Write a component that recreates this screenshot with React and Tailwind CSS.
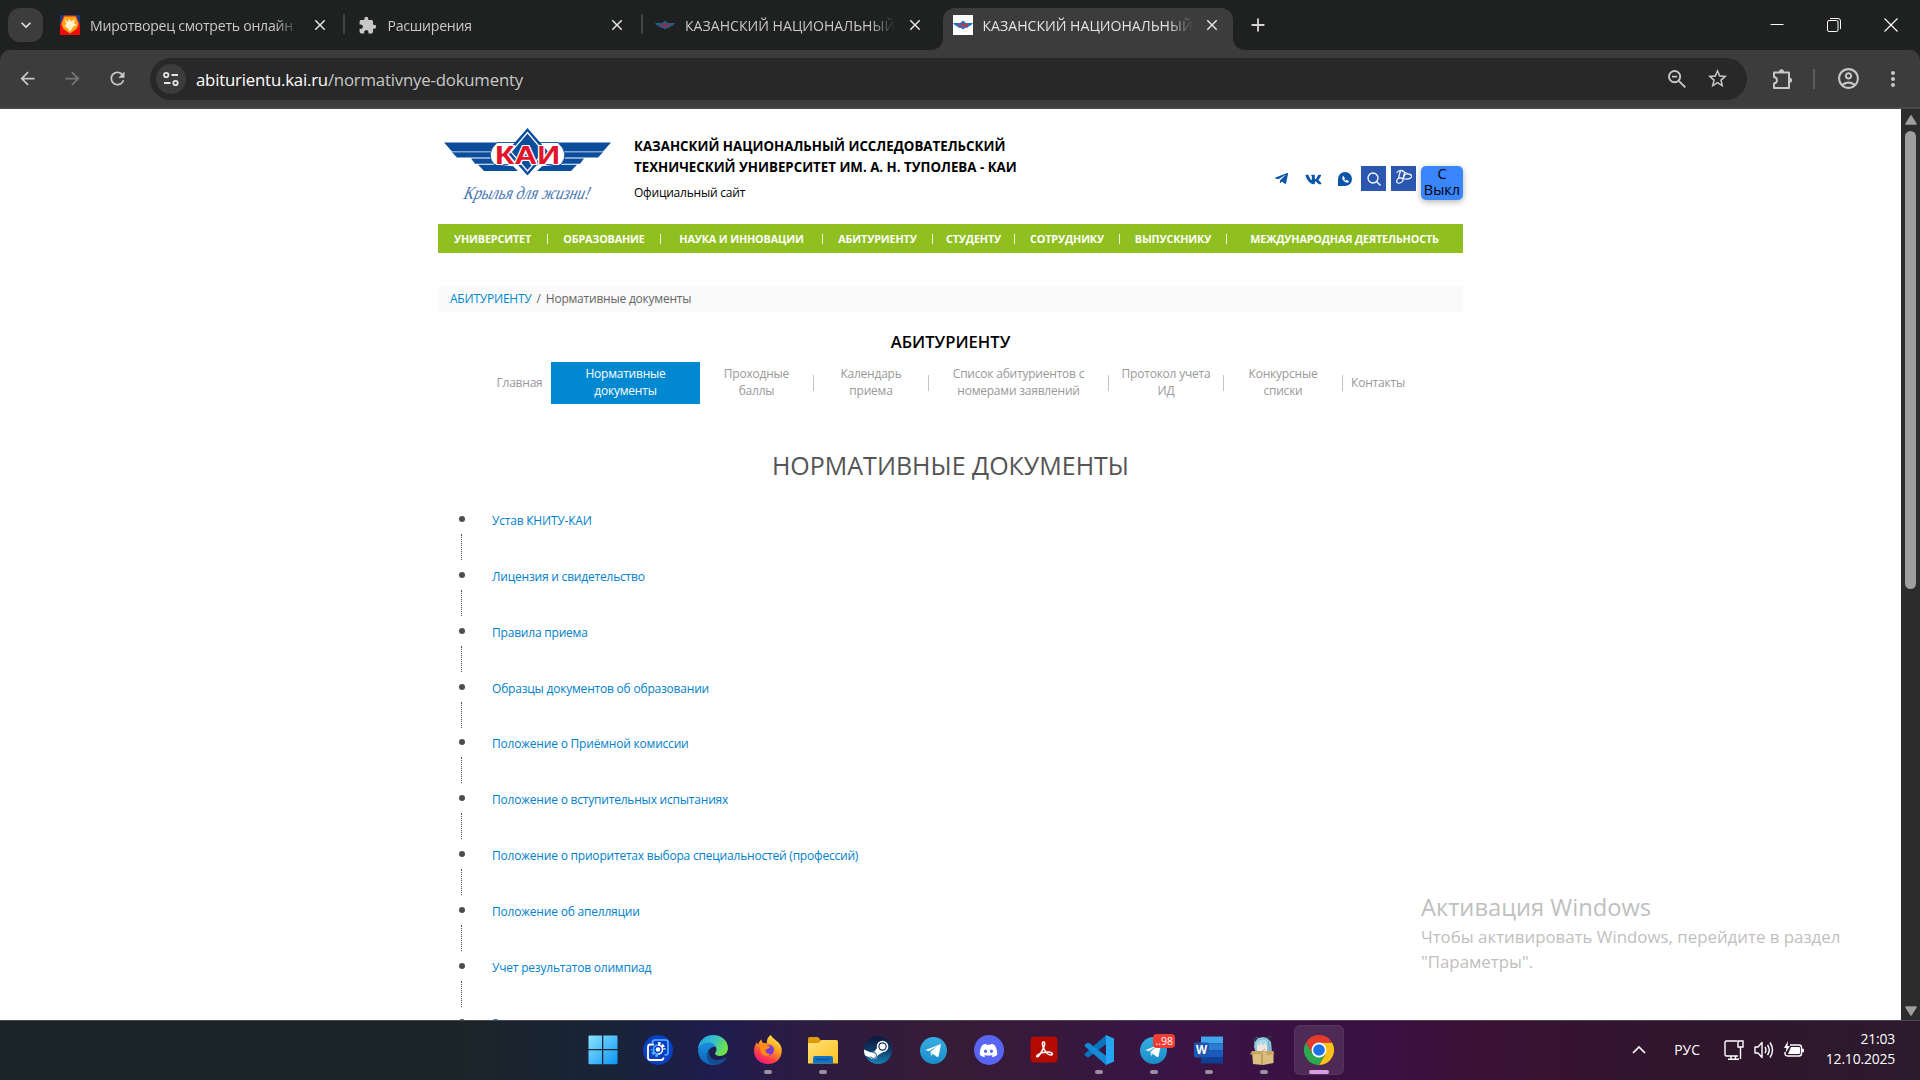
import React from "react";
import {
  MdArrowBack, MdArrowForward, MdRefresh, MdClose, MdAdd, MdExtension,
  MdStarOutline, MdMoreVert, MdKeyboardArrowDown, MdOutlineAccountCircle,
} from "react-icons/md";
import { FaTelegramPlane, FaVk, FaDiscord } from "react-icons/fa";

const tabs = [
  { title: "Миротворец смотреть онлайн", icon: "shield", sep: true, text: "tracking-[-0.018em]" },
  { title: "Расширения", icon: "puzzle", sep: true, text: "tracking-[-0.018em]" },
  { title: "КАЗАНСКИЙ НАЦИОНАЛЬНЫЙ", icon: "kai", text: "" },
  { title: "КАЗАНСКИЙ НАЦИОНАЛЬНЫЙ", icon: "kaiWhite", active: true, text: "" },
];

const nav = [
  ["УНИВЕРСИТЕТ", "w-[110px]"],
  ["ОБРАЗОВАНИЕ", "w-[113px]"],
  ["НАУКА И ИННОВАЦИИ", "w-[162px]"],
  ["АБИТУРИЕНТУ", "w-[110px]"],
  ["СТУДЕНТУ", "w-[82px]"],
  ["СОТРУДНИКУ", "w-[105px]"],
  ["ВЫПУСКНИКУ", "w-[107px]"],
  ["МЕЖДУНАРОДНАЯ ДЕЯТЕЛЬНОСТЬ", "w-[235px]"],
];

const subnav = [
  [["Главная"], "w-[63px]", "none"],
  [["Нормативные", "документы"], "w-[149px]", "active"],
  [["Проходные", "баллы"], "w-[114px]", "sep"],
  [["Календарь", "приема"], "w-[115px]", "sep"],
  [["Список абитуриентов с", "номерами заявлений"], "w-[180px]", "sep"],
  [["Протокол учета", "ИД"], "w-[115px]", "sep"],
  [["Конкурсные", "списки"], "w-[119px]", "sep"],
  [["Контакты"], "w-[70px]", "none"],
];

const docs = [
  "Устав КНИТУ-КАИ",
  "Лицензия и свидетельство",
  "Правила приема",
  "Образцы документов об образовании",
  "Положение о Приёмной комиссии",
  "Положение о вступительных испытаниях",
  "Положение о приоритетах выбора специальностей (профессий)",
  "Положение об апелляции",
  "Учет результатов олимпиад",
  "Заявления",
];

function MiniWings() {
  return (
    <svg viewBox="0 0 20 20" className="h-5 w-5">
      <path d="M0 8h7l3-2.500 3 2.500h7l-2 2.500-2 .5-1 1.500-3 .5-2 1.500-2-1.500-3-.5-1-1.500-2-.5z" fill="#1b78c4" />
      <path d="M6 8.500v3.500M6.500 10.200l2-1.700M6.500 10.200l2 1.700M9 12l1-4 1 4M12.300 8.500v3.500l2-3.500v3.500" stroke="#e02a3a" strokeWidth="1" fill="none" />
    </svg>
  );
}

function Favicon({ kind }) {
  if (kind === "shield")
    return (
      <svg viewBox="0 0 20 20" className="h-5 w-5">
        <path d="M0 0h20v9H0z" fill="#0b3a86" />
        <path d="M0 9h20v11H0z" fill="#f50a0a" />
        <path d="M4 1h12l3 8-2 5-7 5-7-5-2-5z" fill="#ffa514" stroke="#e8201a" strokeWidth="1" />
        <path d="M4.500 4l3.500 3 1-3.500 2 3 4-2.500-1 4 2.500 2-3 1.500-3.500 5-2.500-3.500-3-2 2-2z" fill="#fff3d0" />
      </svg>
    );
  if (kind === "puzzle") return <MdExtension className="h-[19px] w-[19px] text-[#c7c7c7]" />;
  if (kind === "kai") return <div className="opacity-70"><MiniWings /></div>;
  return <div className="bg-white"><MiniWings /></div>;
}

function Tab({ tab }) {
  return (
    <div className="flex h-[50px] w-[297.5px] shrink-0 items-end">
      <div className={"relative flex h-[42px] w-[290px] items-center rounded-t-[12px] pb-2 pl-[10px] " + (tab.active ? "bg-[#3c3c3c]" : "")}>
        {tab.active && (
          <>
            <svg viewBox="0 0 12 12" className="absolute bottom-0 -left-3 h-3 w-3"><path d="M12 0v12H0C7 12 12 7 12 0z" fill="#3c3c3c" /></svg>
            <svg viewBox="0 0 12 12" className="absolute -right-3 bottom-0 h-3 w-3"><path d="M0 0v12h12C5 12 0 7 0 0z" fill="#3c3c3c" /></svg>
          </>
        )}
        <div className="flex w-5 shrink-0 justify-center"><Favicon kind={tab.icon} /></div>
        <div className={"ml-[10px] w-[210px] shrink-0 overflow-hidden whitespace-nowrap pt-px text-[14.1px] leading-5 [mask-image:linear-gradient(to_right,black_88%,transparent)] " + tab.text + (tab.active ? " text-[#e3e3e3]" : " text-[#c7c7c7]")}>
          {tab.title}
        </div>
        <MdClose className="ml-[10.5px] h-[18px] w-[18px] shrink-0 text-[#e3e3e3]" />
      </div>
      {tab.sep && <div className="mb-4 ml-[3px] h-5 w-[2px] rounded bg-[#454746]" />}
    </div>
  );
}

function Browser() {
  return (
    <header className="bg-[#1f2120]">
      <div className="flex h-[50px]">
        <div className="flex w-[50px] items-center pl-2">
          <div className="flex h-[34px] w-[35px] items-center justify-center rounded-[12px] bg-[#3c3c3c]">
            <MdKeyboardArrowDown className="h-5 w-5 text-[#e3e3e3]" />
          </div>
        </div>
        {tabs.map((t, i) => <Tab key={i} tab={t} />)}
        <div className="flex flex-1 items-center pl-[7px]">
          <MdAdd className="h-[22px] w-[22px] text-[#d5d5d5]" />
        </div>
        <div className="flex w-[169px] items-center text-white">
          <svg viewBox="0 0 14 14" className="ml-[19px] h-[14px] w-[14px]"><path d="M0.5 6.5h13" stroke="currentColor" /></svg>
          <svg viewBox="0 0 14 14" className="ml-[43px] h-[14px] w-[14px]" fill="none" stroke="currentColor"><rect x="0.5" y="2.5" width="10.5" height="11" rx="1.5" /><path d="M3 .5h8a2.5 2.5 0 0 1 2.5 2.5v8" /></svg>
          <svg viewBox="0 0 14 14" className="ml-[43px] h-[14px] w-[14px]"><path d="M.5.5l13 13M13.5.5l-13 13" stroke="currentColor" strokeWidth="1.1" /></svg>
        </div>
      </div>
      <div className="flex h-[59px] items-center rounded-t-[10px] border-b-2 border-[#474747] bg-[#3c3c3c] text-[#c7c7c7]">
        <MdArrowBack className="ml-[17px] h-[21px] w-[21px]" />
        <MdArrowForward className="ml-6 h-[21px] w-[21px] text-[#757575]" />
        <MdRefresh className="ml-6 h-[21px] w-[21px]" />
        <div className="ml-[22px] flex h-[42px] w-[1597px] items-center rounded-full bg-[#282828]">
          <div className="ml-[6px] flex h-[30px] w-[30px] items-center justify-center rounded-full bg-[#3c3c3c]">
            <svg viewBox="0 0 18 18" className="h-[18px] w-[18px]" fill="none" stroke="#e3e3e3" strokeWidth="1.8">
              <circle cx="4.2" cy="5" r="2.2" /><path d="M9.5 5H16M2 13h6.5" /><circle cx="13.5" cy="13" r="2.2" />
            </svg>
          </div>
          <div className="ml-[10px] flex-1 pt-[2px] text-[16.8px] leading-6 tracking-[-0.012em] text-[#c7c7c7]"><span className="text-white">abiturientu.kai.ru</span>/normativnye-dokumenty</div>
          <svg viewBox="0 0 20 20" className="h-5 w-5" fill="none" stroke="currentColor" strokeWidth="1.9"><circle cx="7.600" cy="7.600" r="5.600" /><path d="M5 7.600h5.200M11.800 11.800l6.500 6.500" /></svg>
          <MdStarOutline className="ml-[19px] mr-[18px] h-[23px] w-[23px]" />
        </div>
        <svg viewBox="0 0 22 22" className="ml-[24px] h-[22px] w-[22px]" strokeLinejoin="round">
          <path d="M3 4.500h15V20H3v-4.500q3-.5 3-3.200T3 9z" fill="none" stroke="currentColor" strokeWidth="2" />
          <path d="M8 4a2.500 2.800 0 0 1 5 0zM18.500 9.800a2.600 2.500 0 0 1 0 5z" fill="currentColor" />
        </svg>
        <div className="ml-[20px] h-5 w-[2px] bg-[#5c5c5c]" />
        <MdOutlineAccountCircle className="ml-[21px] h-[25px] w-[25px]" />
        <MdMoreVert className="ml-5 h-6 w-6" />
      </div>
    </header>
  );
}

function Logo() {
  return (
    <svg viewBox="0 0 167 80" className="h-20 w-[167px]">
      <g fill="#0a4d9c">
        {[false, true].map((m) => (
          <g key={String(m)} transform={m ? "translate(167 0) scale(-1 1)" : undefined}>
            <path d="M0 14.5h55l-6 9H8z" />
            <path d="M8 24.2h41v5.3H13z" />
            <path d="M27 30.6h20l5 5.2H31z" />
            <path d="M34 36.8h21l14 1.5 5 4.7H40z" />
          </g>
        ))}
        <path d="M53 14.5h61q12 11 3 22H50q-9-11 3-22z" fill="#fff" stroke="#0a4d9c" strokeWidth="0.9" />
        <path d="M83.5 0l21 24-21 23.5-21-23.5z" />
      </g>
      <path d="M83.5 4.500l16.500 19.500-16.500 19-16.500-19z" fill="none" stroke="#fff" strokeWidth="1.200" />
      <text x="51" y="35.500" textLength="65" lengthAdjust="spacingAndGlyphs" fontFamily="Liberation Sans, sans-serif" fontWeight="700" fontSize="25" fill="#e3142a" stroke="#fff" strokeWidth="2.200" paintOrder="stroke" strokeLinejoin="round">КАИ</text>
      <g transform="translate(19 71) skewX(-14)">
        <text x="0" y="0" textLength="126" lengthAdjust="spacingAndGlyphs" fontFamily="Liberation Serif, serif" fontStyle="italic" fontSize="18.500" fill="#4a76b4">Крылья для жизни!</text>
      </g>
    </svg>
  );
}

function SiteHeader() {
  return (
    <div className="flex h-[115px] pl-[6px]">
      <div className="pt-[19px]"><Logo /></div>
      <div className="ml-[23px] flex-1 pt-[27px] text-black">
        <div className="text-[13.3px] font-bold leading-[21px]">
          <div>КАЗАНСКИЙ НАЦИОНАЛЬНЫЙ ИССЛЕДОВАТЕЛЬСКИЙ</div>
          <div>ТЕХНИЧЕСКИЙ УНИВЕРСИТЕТ ИМ. А. Н. ТУПОЛЕВА - КАИ</div>
        </div>
        <div className="mt-1 text-[12px] leading-[21px] tracking-[-0.018em]">Официальный сайт</div>
      </div>
      <div className="flex items-start pt-[57px] text-[#0a55a8]">
        <FaTelegramPlane className="mt-[5px] h-[15px] w-[15px]" />
        <FaVk className="ml-[16px] mt-[5px] h-[17px] w-[17px]" />
        <div className="ml-[16px] mt-[6px] flex h-[14px] w-[14px] items-center justify-center rounded-full rounded-bl-[2px] bg-[#0a55a8]">
          <svg viewBox="0 0 10 10" className="h-[9px] w-[9px]"><path d="M2.5 2c-1.6 2 3 7 5.4 5.4M2.4 2.2l1.2 1.6M6.3 6.2l1.6 1.2" stroke="#fff" strokeWidth="1.5" fill="none" strokeLinecap="round" /></svg>
        </div>
        <div className="ml-[9px] flex h-[25px] w-[25px] items-center justify-center bg-[#2b57b0]">
          <svg viewBox="0 0 14 14" className="h-[14px] w-[14px]" fill="none" stroke="#fff" strokeWidth="1.3"><circle cx="6" cy="6" r="5" /><path d="M9.5 9.5l4 4" /></svg>
        </div>
        <div className="ml-[5px] flex h-[25px] w-[25px] justify-center bg-[#2b57b0] pt-[3px]">
          <svg viewBox="0 0 16 16" className="h-4 w-4" fill="none" stroke="#fff" strokeWidth="1.200" strokeLinejoin="round" strokeLinecap="round">
            <path d="M1 3.500q2-3 6-2M4.500 1.500L2.500 9M2 9.500q3-1.500 4.500.5T5 13.500t-4 0T2 9.500M6 2l8.500 4M8.500 4L7 9.500q4.500 1.500 7.500-.5t0-3.500-5.500 0L7 9.500" />
          </svg>
        </div>
        <div className="ml-[5px] h-[34px] w-[42px] rounded-[5px] bg-[#3a86ff] text-center text-[14.5px] leading-4 text-black shadow-[0_2px_6px_rgba(0,0,0,0.3)]">
          <div>С</div><div>Выкл</div>
        </div>
      </div>
    </div>
  );
}

function Page() {
  return (
    <div className="flex h-[911px] overflow-hidden bg-white">
      <main className="flex-1">
        <div className="ml-[438px] w-[1025px]">
          <SiteHeader />
          <nav className="flex h-[29px] items-center bg-[#8fc01f] text-[10.8px] font-bold leading-4 tracking-[-0.014em] text-white">
            {nav.map(([t, w], i) => (
              <div key={t} className={"flex shrink-0 items-center " + w}>
                <div className="flex-1 whitespace-nowrap text-center">{t}</div>
                {i < nav.length - 1 && <div className="h-[10px] w-px bg-white/90" />}
              </div>
            ))}
          </nav>
          <div className="mt-[33px] flex h-[26px] items-center bg-[#fafafa] pl-3 text-[12px] tracking-[-0.018em] text-[#666]">
            <span className="text-[#0088d1]">АБИТУРИЕНТУ</span><span className="mx-[5px]">/</span><span>Нормативные документы</span>
          </div>
          <div className="mt-[18px] text-center text-[16.6px] font-semibold leading-6 text-black">АБИТУРИЕНТУ</div>
          <div className="mt-2 flex h-[42px] justify-center text-center text-[12px] leading-[17px] tracking-[-0.018em] text-[#999]">
            {subnav.map(([lines, w, kind]) => (
              <div key={lines[0]} className={"flex items-center whitespace-nowrap " + w + (kind === "active" ? " bg-[#0088d1] text-white" : "")}>
                <div className="flex-1 pb-[2px]">{lines.map((l) => <div key={l}>{l}</div>)}</div>
                {kind === "sep" && <div className="h-4 w-px bg-[#c4c4c4]" />}
              </div>
            ))}
          </div>
          <h1 className="mt-[43px] text-center text-[25px] leading-9 text-[#555]">НОРМАТИВНЫЕ ДОКУМЕНТЫ</h1>
          <ul className="mt-[33px] pl-[21px]">
            {docs.map((d) => (
              <li key={d} className="flex h-[55.87px]">
                <div className="flex w-[33px] flex-col">
                  <div className="h-[6px] w-[6px] rounded-full bg-[#4d4d4d]" />
                  <div className="ml-[2px] mt-3 h-[26px] border-l border-dotted border-[#4d4d4d]" />
                </div>
                <a className="-mt-[4px] text-[12px] leading-[17px] tracking-[-0.017em] text-[#0080cb]">{d}</a>
              </li>
            ))}
          </ul>
        </div>
      </main>
      <div className="flex w-[19px] flex-col items-center bg-[#2c2c2c]">
        <svg viewBox="0 0 12 10" className="mt-[6px] h-[10px] w-3"><path d="M6 1l5 8H1z" fill="#9f9f9f" stroke="#9f9f9f" strokeWidth="1.5" strokeLinejoin="round" /></svg>
        <div className="mt-[6px] h-[458px] w-[11px] rounded-full bg-[#9f9f9f]" />
        <div className="flex-1" />
        <svg viewBox="0 0 12 10" className="mb-1 h-[10px] w-3"><path d="M6 9l5-8H1z" fill="#9f9f9f" stroke="#9f9f9f" strokeWidth="1.5" strokeLinejoin="round" /></svg>
      </div>
    </div>
  );
}

function WindowsIcon() {
  return (
    <svg viewBox="0 0 30 30" className="h-[30px] w-[30px]">
      <defs><linearGradient id="win" x1="0" y1="0" x2="1" y2="1"><stop offset="0" stopColor="#8be4ff" /><stop offset="1" stopColor="#0a95f5" /></linearGradient></defs>
      <path d="M.5 1.500q0-1 1-1H14v13.500H.5zM15.300.5H28.500q1 0 1 1V14H15.300zM.5 15.300H14v14H1.500q-1 0-1-1zM15.300 15.300H29.500v13q0 1-1 1H15.300z" fill="url(#win)" />
    </svg>
  );
}
function GearIcon() {
  return (
    <svg viewBox="0 0 30 30" className="h-[30px] w-[30px]" fill="none">
      <circle cx="15" cy="15" r="15" fill="#0a3fc4" />
      <path d="M9.500 8V7.500q0-2.500 2.500-2.500h10.500q2.500 0 2.500 2.500v10q0 2.500-2.500 2.500h-1" stroke="#55b4ff" strokeWidth="1.600" />
      <path d="M15 8.500a6 6 0 0 1 6 6" stroke="#fff" strokeWidth="3" strokeDasharray="2.600 1.400" />
      <path d="M15 20.500a6 6 0 0 1-6-6" stroke="#55b4ff" strokeWidth="2.600" strokeDasharray="2.600 1.400" />
      <path d="M15 10a4.500 4.500 0 0 1 0 9" stroke="#fff" strokeWidth="1.500" />
      <path d="M15 10a4.500 4.500 0 0 0 0 9" stroke="#55b4ff" strokeWidth="1.500" />
      <circle cx="15" cy="14.500" r="2.300" fill="#fff" />
      <path d="M11 9.500H7.500Q5 9.500 5 12v10.500Q5 25 7.500 25H18q2.500 0 2.500-2.500" stroke="#fff" strokeWidth="1.800" />
    </svg>
  );
}
function EdgeIcon() {
  return (
    <svg viewBox="0 0 30 30" className="h-[30px] w-[30px]">
      <defs>
        <linearGradient id="e1" x1="0" y1="0" x2="1" y2=".4"><stop offset="0" stopColor="#1b9de2" /><stop offset=".55" stopColor="#35c1c8" /><stop offset="1" stopColor="#6fe24a" /></linearGradient>
        <linearGradient id="e2" x1="0" y1="0" x2="0" y2="1"><stop offset="0" stopColor="#1b8fe0" /><stop offset="1" stopColor="#0c63b8" /></linearGradient>
      </defs>
      <path d="M15 0C24 0 30 6 30 13c0 5-4 8-8 8-3 0-5-1-5-2.500 0-1 1.500-1.500 1.500-4C18.500 11 15 8 10.500 8 5 8 1 11 0 15 0 6 7 0 15 0z" fill="url(#e1)" />
      <path d="M0 15c1-4.500 5-7.500 10-7.500 4 0 7 2 8 4.500-4-1-8 2-8 7 0 6 4 10 9 10.500C8 32 0 24 0 15z" fill="url(#e2)" />
      <path d="M11.500 14c-2 6 2 11 8 11 3 0 6-1 8-2.500.8-.5 1.300.2.800 1-2.800 4.500-8 6.500-11.500 6.500-5-1-8-5-8-9.500 0-3 1-5.300 2.700-6.500z" fill="#134d8f" />
    </svg>
  );
}
function FirefoxIcon() {
  return (
    <svg viewBox="0 0 30 30" className="h-[30px] w-[30px]">
      <defs><linearGradient id="ff" x1=".8" y1="0" x2=".25" y2="1"><stop offset="0" stopColor="#fff04a" /><stop offset=".4" stopColor="#ffa01e" /><stop offset=".75" stopColor="#ff3b4a" /><stop offset="1" stopColor="#e31587" /></linearGradient></defs>
      <path d="M18 0c1 4 9 6 10.500 13C30 22 24 29 15.500 29 7 29 1 23.500 1 16c0-4 1.500-7 3-9 .2 1.500.6 2 1.200 2.500C6 7 7 5.500 8.500 4.500c0 2 1 3.500 2.500 3.500l3 .5c-.5-4 1-7 4-8.500z" fill="url(#ff)" />
      <circle cx="15.500" cy="15" r="5.500" fill="#7a3fd0" />
      <path d="M5 10c3-2 7-2 9 .5 2 0 3 .5 3 1.500-1 2-4 1.500-4.500 3.500 0 2.500 2.500 4 5 3.500-2 2.500-6.500 2.500-8.500 0S8 13 5 10z" fill="#ff8a16" />
    </svg>
  );
}
function FolderIcon() {
  return (
    <svg viewBox="0 0 30 30" className="h-[30px] w-[30px]">
      <defs><linearGradient id="fo" x1="0" y1="0" x2="1" y2="1"><stop offset="0" stopColor="#ffe27a" /><stop offset="1" stopColor="#ffc01e" /></linearGradient></defs>
      <path d="M0 3.500Q0 2 1.500 2H10l3 3.500H28V12H0z" fill="#dd9b06" />
      <path d="M0 8h10.500l3-3h15Q30 5 30 6.500v22H0z" fill="url(#fo)" />
      <path d="M5 28.500V23q0-2 2-2h16q2 0 2 2v5.500z" fill="#1173c7" />
      <path d="M8.500 24.500h13" stroke="#0a4f95" strokeWidth="1.300" />
    </svg>
  );
}
function SteamIcon() {
  return (
    <svg viewBox="0 0 28 28" className="h-7 w-7">
      <defs>
        <linearGradient id="st" x1="0" y1="0" x2="0" y2="1"><stop offset="0" stopColor="#0b1638" /><stop offset=".5" stopColor="#103a66" /><stop offset="1" stopColor="#1583b5" /></linearGradient>
        <clipPath id="stc"><circle cx="14" cy="14" r="14" /></clipPath>
      </defs>
      <circle cx="14" cy="14" r="14" fill="url(#st)" />
      <g clipPath="url(#stc)">
        <path d="M-1 13l10 4.500L14.500 10l6 5L12 20.500 9 23l-4-2-6-2z" fill="#fff" />
        <circle cx="18.500" cy="10.500" r="5.800" fill="#fff" />
        <circle cx="18.500" cy="10.500" r="4.200" fill="#123258" />
        <circle cx="18.500" cy="10.500" r="3" fill="#fff" />
        <circle cx="9.500" cy="19.500" r="3.800" fill="#fff" />
        <path d="M6.500 20.500q1 2 3 2a3 3 0 0 0 0-6l-1 0" fill="none" stroke="#124a78" strokeWidth="1" />
      </g>
    </svg>
  );
}
function TelegramIcon() {
  return (
    <svg viewBox="0 0 27 27" className="h-[27px] w-[27px]">
      <defs><linearGradient id="tg" x1="0" y1="0" x2="0" y2="1"><stop offset="0" stopColor="#36aee2" /><stop offset="1" stopColor="#1c8cc8" /></linearGradient></defs>
      <circle cx="13.500" cy="13.500" r="13.500" fill="url(#tg)" />
      <path d="M5.500 13L20 7.300q1-.3.800.9L18.500 19.300q-.3 1.200-1.300.6L10.300 15l7-6.300L8.800 14.200z" fill="#fff" />
      <path d="M10.300 15l.7 4 2-2z" fill="#d2e6f3" />
    </svg>
  );
}
function AcrobatIcon() {
  return (
    <svg viewBox="0 0 28 28" className="h-7 w-7" fill="none">
      <rect x=".5" y=".5" width="27" height="26" rx="4" fill="#b30b00" />
      <path d="M13.500 6c-2 0-1 4 .5 7s4.500 6 7 6 1.500-3-2.500-3-9 1.500-11 3 0 3 2 0 4.500-7.500 5-10-.2-3-1-3z" stroke="#fff" strokeWidth="1.500" />
    </svg>
  );
}
function CodeIcon() {
  return (
    <svg viewBox="0 0 30 30" className="h-[30px] w-[30px]">
      <path d="M22 0L1 18.500q-1 1 0 2l2 1.500q1 .5 2 0L23 8.500z" fill="#0a73bd" />
      <path d="M22 30L1 11.500q-1-1 0-2L3 8q1-.5 2 0L23 21.500z" fill="#1489d6" />
      <path d="M22 0l8 3.500v23L22 30z" fill="#25a5f2" />
    </svg>
  );
}
function WordIcon() {
  return (
    <svg viewBox="0 0 30 30" className="h-[30px] w-[30px]">
      <path d="M7 1.500h22V8.500H7z" fill="#41a5ee" /><path d="M7 8.500h22v7H7z" fill="#2b7cd3" /><path d="M7 15.500h22v7H7z" fill="#185abd" /><path d="M7 22h22v6.500H7z" fill="#103f91" />
      <rect x="0" y="7.500" width="15" height="15" rx="1.500" fill="#1c56b0" />
      <text x="7.500" y="19" textAnchor="middle" fontFamily="Open Sans, sans-serif" fontWeight="700" fontSize="11.500" fill="#fff">W</text>
    </svg>
  );
}
function BoxIcon() {
  return (
    <svg viewBox="0 0 30 30" className="h-[30px] w-[30px]">
      <path d="M6 2l4 1 4-1 4 1 4-2v6l1 11H7L5 12z" fill="#8cc6dc" />
      <path d="M6 2l3 1-3 4zM22 1l-4 2 4 4z" fill="#2a2a38" />
      <path d="M8 9q5.500-4 10 0v7H8z" fill="#f6e3dc" />
      <path d="M7 8q6-6 12-1l-1 4-2-3-2 3-2-3-2 3-1-3-1 4z" fill="#a9dceb" />
      <path d="M19 6l2 10M16 14l-2 2" stroke="#5f9cb8" strokeWidth=".8" />
      <path d="M3 16h21.500v12L14 30 4 29z" fill="#dcbf80" />
      <path d="M3 16l-2 3.500 12-.5 2-3zM15.500 16l3 4.500 7-1.500-2-3z" fill="#c7a55f" />
      <path d="M13 19v11" stroke="#9d7f43" />
    </svg>
  );
}
function ChromeIcon() {
  return (
    <svg viewBox="0 0 30 30" className="h-[30px] w-[30px]">
      <path d="M15 7.500h13A15 15 0 0 1 15 30l6.500-11.200z" fill="#fbc116" />
      <path d="M21.500 18.800L15 30A15 15 0 0 1 2 7.500L8.500 18.800z" fill="#2da94f" />
      <path d="M15 7.500h13A15 15 0 0 0 2 7.500l6.500 11.200z" fill="#e33b2e" />
      <circle cx="15" cy="15" r="7.500" fill="#fff" /><circle cx="15" cy="15" r="5.800" fill="#1a73e8" />
    </svg>
  );
}

const apps = [
  { el: <WindowsIcon /> }, { el: <GearIcon /> }, { el: <EdgeIcon /> },
  { el: <FirefoxIcon />, run: true }, { el: <FolderIcon />, run: true },
  { el: <SteamIcon /> }, { el: <TelegramIcon /> },
  { el: <div className="flex h-[30px] w-[30px] items-center justify-center rounded-full bg-[#5865f2]"><FaDiscord className="h-[19px] w-[19px] text-white" /></div> },
  { el: <AcrobatIcon /> }, { el: <CodeIcon />, run: true },
  { el: <TelegramIcon />, run: true, badge: "..98" },
  { el: <WordIcon />, run: true }, { el: <BoxIcon />, run: true }, { el: <ChromeIcon />, active: true },
];

function Taskbar() {
  return (
    <footer className="flex h-[60px] border-t border-[#4d4850] bg-[linear-gradient(90deg,#1a2428_0px,#1b2529_460px,#182339_620px,#1f1c4e_715px,#2c1b42_800px,#361c36_950px,#391445_1180px,#3a1140_1400px,#391233_1500px,#2f162c_1700px,#2c1a2d_1920px)] pb-px text-white">
      <div className="ml-[575px] flex">
        {apps.map((a, i) => (
          <div key={i} className="flex w-[55.150px] items-center justify-center">
            <div className={"relative flex h-[50px] w-[50px] items-center justify-center rounded-[6px] " + (a.active ? "border border-white/5 bg-white/10" : "")}>
              {a.el}
              {a.badge && <div className="absolute right-[4px] top-[9px] h-[14px] rounded-[4px] bg-[#f23c34] px-[2px] text-[10.500px] leading-[14px]">{a.badge}</div>}
              {a.run && <div className="absolute bottom-[1px] h-1 w-2 rounded-full bg-[#9c8fa2]" />}
              {a.active && <div className="absolute bottom-0 h-1 w-5 rounded-full bg-[#d99fe2]" />}
            </div>
          </div>
        ))}
      </div>
      <div className="flex flex-1 items-center justify-end pr-[25px]">
        <svg viewBox="0 0 14 8" className="h-2 w-[14px]"><path d="M1 7l6-6 6 6" fill="none" stroke="#fff" strokeWidth="1.700" /></svg>
        <div className="ml-[28px] text-[13.800px]">РУС</div>
        <svg viewBox="0 0 20 20" className="ml-[24px] h-5 w-5" fill="none" stroke="#fff" strokeWidth="1.400"><path d="M13 1H2.500Q1 1 1 2.500v12Q1 16 2.500 16H14M4 19.200h11M7 16v3M11.500 16v3M14 1h5v6h-5zM16.500 7v12" /></svg>
        <svg viewBox="0 0 20 18" className="ml-[10px] h-[18px] w-5" fill="none" stroke="#fff" strokeWidth="1.400" strokeLinejoin="round"><path d="M1 6h3l4-4.500v15L4 12H1zM11 6q2 3 0 6M13.500 4q3.500 5 0 10M16 1.500q5 7.500 0 15" /></svg>
        <svg viewBox="0 0 20 18" className="ml-[10px] h-[18px] w-5"><path d="M6 4h9q2.500 0 2.500 2.500v6Q17.500 15 15 15H3.500Q1 15 1 12.500V11" fill="none" stroke="#fff" strokeWidth="1.400" /><path d="M7 6h8q1 0 1 1v5q0 1-1 1H4zM18 7.500l2 .5v3l-2 .5zM4 0L0 7h2.500L1.500 12 6 5H3.500z" fill="#fff" /></svg>
        <div className="ml-[22px] pb-[2px] text-right text-[13.900px] leading-[20px] tracking-[-0.012em]"><div>21:03</div><div>12.10.2025</div></div>
      </div>
    </footer>
  );
}

export default function App() {
  return (
    <div className="relative h-[1080px] w-[1920px] overflow-hidden font-['Open_Sans',sans-serif]">
      <Browser />
      <Page />
      <Taskbar />
      <div className="absolute left-[1421px] top-[891px] text-[#bfbfbf]">
        <div className="text-[23.700px] leading-8">Активация Windows</div>
        <div className="mt-[1px] whitespace-nowrap text-[16.850px] leading-[25px]"><div>Чтобы активировать Windows, перейдите в раздел</div><div>"Параметры".</div></div>
      </div>
    </div>
  );
}
